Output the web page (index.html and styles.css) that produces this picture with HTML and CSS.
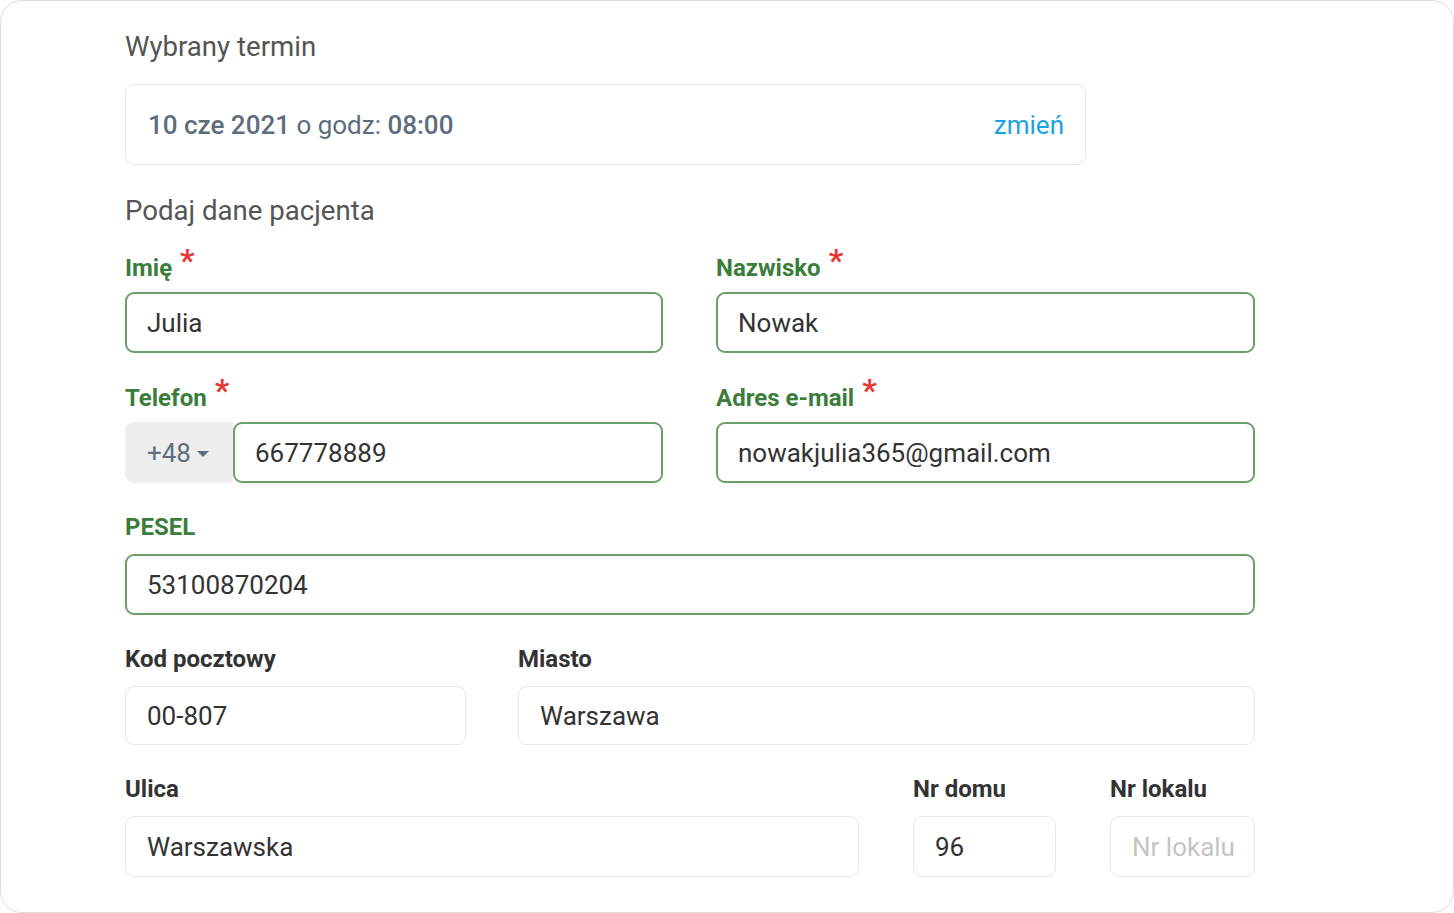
FILE: index.html
```html
<!DOCTYPE html>
<html lang="pl">
<head>
<meta charset="utf-8">
<title>Dane pacjenta</title>
<link rel="stylesheet" href="styles.css">
</head>
<body>
<div class="card">
  <div class="content">
    <h2 class="section-title">Wybrany termin</h2>
    <div class="term-box">
      <div class="term-text"><span class="strong">10 cze 2021</span> o godz: <span class="strong">08:00</span></div>
      <a class="change-link" href="#">zmień</a>
    </div>

    <h2 class="section-title second">Podaj dane pacjenta</h2>

    <div class="row cols-2 first-row">
      <div class="field">
        <label class="label valid">Imię <span class="req">*</span></label>
        <div class="input valid">Julia</div>
      </div>
      <div class="field">
        <label class="label valid">Nazwisko <span class="req">*</span></label>
        <div class="input valid">Nowak</div>
      </div>
    </div>

    <div class="row cols-2">
      <div class="field">
        <label class="label valid">Telefon <span class="req">*</span></label>
        <div class="phone">
          <div class="prefix">+48 <span class="caret"></span></div>
          <div class="input valid phone-input">667778889</div>
        </div>
      </div>
      <div class="field">
        <label class="label valid">Adres e-mail <span class="req">*</span></label>
        <div class="input valid">nowakjulia365@gmail.com</div>
      </div>
    </div>

    <div class="row wide-gap">
      <div class="field">
        <label class="label valid">PESEL</label>
        <div class="input valid">53100870204</div>
      </div>
    </div>

    <div class="row cols-city wide-gap">
      <div class="field">
        <label class="label">Kod pocztowy</label>
        <div class="input short">00-807</div>
      </div>
      <div class="field">
        <label class="label">Miasto</label>
        <div class="input short">Warszawa</div>
      </div>
    </div>

    <div class="row cols-street wide-gap">
      <div class="field">
        <label class="label">Ulica</label>
        <div class="input">Warszawska</div>
      </div>
      <div class="field">
        <label class="label">Nr domu</label>
        <div class="input">96</div>
      </div>
      <div class="field">
        <label class="label">Nr lokalu</label>
        <div class="input placeholder">Nr lokalu</div>
      </div>
    </div>

    <p class="consent">Wyrażam zgodę na przetwarzanie moich danych osobowych w celu realizacji wizyty</p>
  </div>
</div>
</body>
</html>
```

FILE: styles.css
```css
html, body {
  margin: 0;
  padding: 0;
  background: #ffffff;
}

body {
  font-family: Roboto, "Noto Sans", "Liberation Sans", sans-serif;
  color: #333333;
}

.card {
  box-sizing: border-box;
  width: 1454px;
  height: 913px;
  border: 1.5px solid #dedede;
  border-radius: 22px;
  overflow: hidden;
  background: #ffffff;
}

.content {
  width: 1130px;
  margin-left: 124px;
  padding-top: 30px;
}

.section-title {
  margin: 0;
  font-size: 27.6px;
  font-weight: 400;
  line-height: 32px;
  color: #555555;
}

.section-title.second {
  margin-top: 30px;
}

.term-box {
  box-sizing: border-box;
  width: 961px;
  height: 81px;
  margin-top: 21px;
  border: 1.5px solid #e6e6e6;
  border-radius: 9px;
  display: flex;
  align-items: center;
  justify-content: space-between;
  padding: 0 21px 0 22px;
}

.term-text {
  font-size: 26px;
  color: #5d6d7e;
}

.term-text .strong {
  font-weight: 500;
}

.change-link {
  font-size: 26px;
  color: #1ba3e3;
  text-decoration: none;
}

.row {
  display: grid;
  grid-template-columns: 1fr;
  margin-top: 29px;
}

.row.first-row {
  margin-top: 25px;
}

.row.wide-gap {
  margin-top: 31px;
}

.cols-2 {
  grid-template-columns: 538px 539px;
  column-gap: 53px;
}

.cols-city {
  grid-template-columns: 341px 737px;
  column-gap: 52px;
}

.cols-street {
  grid-template-columns: 734px 143px 145px;
  column-gap: 54px;
}

.field {
  display: flex;
  flex-direction: column;
}

.label {
  display: block;
  font-size: 24px;
  font-weight: 700;
  line-height: 26px;
  height: 26px;
  margin-bottom: 14px;
  color: #333333;
}

.label.valid {
  color: #3b7d3b;
}

.req {
  color: #e53935;
  font-size: 32px;
  font-weight: 700;
  position: relative;
  top: -5px;
  margin-left: 2px;
}

.input {
  box-sizing: border-box;
  height: 61px;
  border: 1.5px solid #e4e8ee;
  border-radius: 9px;
  padding: 0 20px 0 21px;
  display: flex;
  align-items: center;
  font-size: 26px;
  color: #333333;
  background: #ffffff;
  white-space: nowrap;
  overflow: hidden;
}

.input.short {
  height: 59px;
}

.input.valid {
  border: 2px solid #6a9e6b;
  padding-left: 20px;
}

.input.placeholder {
  color: #c4c4c4;
}

.phone {
  display: flex;
}

.prefix {
  box-sizing: border-box;
  width: 108px;
  height: 61px;
  background: #eeeeee;
  border-radius: 9px 0 0 9px;
  display: flex;
  align-items: center;
  justify-content: center;
  gap: 6px;
  font-size: 26px;
  color: #5d6d7e;
  padding-right: 2px;
}

.caret {
  width: 0;
  height: 0;
  border-left: 6px solid transparent;
  border-right: 6px solid transparent;
  border-top: 6px solid #5d6d7e;
  margin-top: 2px;
}

.phone-input {
  flex: 1;
}

.consent {
  margin: 33px 0 0 0;
  font-size: 22px;
  line-height: 30px;
  color: #555555;
}
```
